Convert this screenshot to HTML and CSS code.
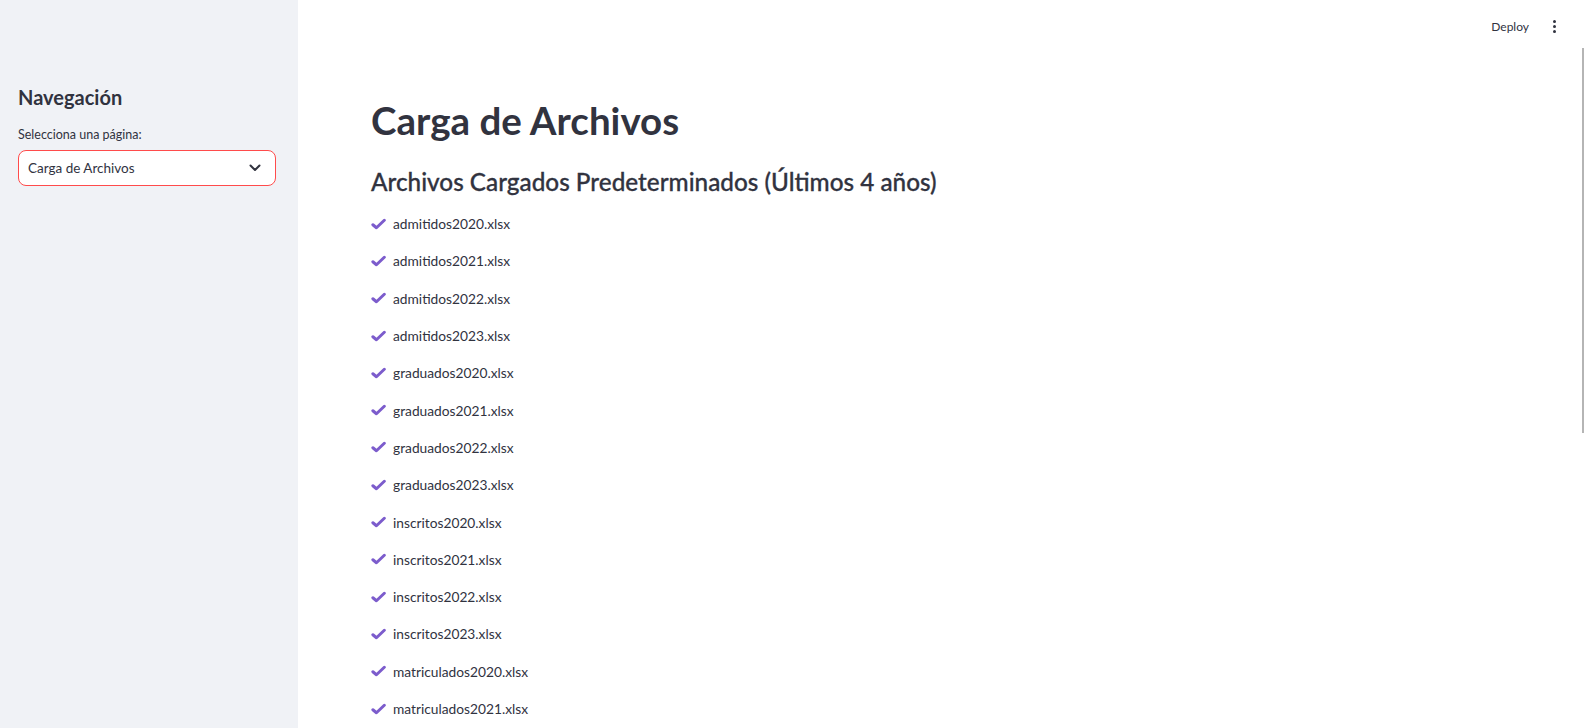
FILE: index.html
```html
<!DOCTYPE html>
<html lang="es">
<head>
<meta charset="utf-8">
<title>Carga de Archivos</title>
<link rel="stylesheet" href="styles.css">
</head>
<body>
<aside class="sidebar">
  <h3 class="side-title">Navegación</h3>
  <label class="side-label">Selecciona una página:</label>
  <div class="select">
    <span class="select-value">Carga de Archivos</span>
    <svg class="chev" width="12" height="8" viewBox="0 0 12 8"><path d="M1.5 1.5 L6 6 L10.5 1.5" fill="none" stroke="#31333f" stroke-width="2" stroke-linecap="round" stroke-linejoin="round"/></svg>
  </div>
</aside>
<main class="main">
  <header class="topbar">
    <span class="deploy">Deploy</span>
    <span class="kebab"><i></i><i></i><i></i></span>
  </header>
  <div class="scrollthumb"></div>
  <section class="content">
    <h1 class="title">Carga de Archivos</h1>
    <h2 class="subtitle">Archivos Cargados Predeterminados (Últimos 4 años)</h2>
    <ul class="files">
      <li><svg class="check" viewBox="0 0 16 12"><path d="M2 6.8 L5.8 10 L14.2 2" fill="none" stroke="currentColor" stroke-width="3.2" stroke-linecap="round" stroke-linejoin="round"/></svg>admitidos2020.xlsx</li>
      <li><svg class="check" viewBox="0 0 16 12"><path d="M2 6.8 L5.8 10 L14.2 2" fill="none" stroke="currentColor" stroke-width="3.2" stroke-linecap="round" stroke-linejoin="round"/></svg>admitidos2021.xlsx</li>
      <li><svg class="check" viewBox="0 0 16 12"><path d="M2 6.8 L5.8 10 L14.2 2" fill="none" stroke="currentColor" stroke-width="3.2" stroke-linecap="round" stroke-linejoin="round"/></svg>admitidos2022.xlsx</li>
      <li><svg class="check" viewBox="0 0 16 12"><path d="M2 6.8 L5.8 10 L14.2 2" fill="none" stroke="currentColor" stroke-width="3.2" stroke-linecap="round" stroke-linejoin="round"/></svg>admitidos2023.xlsx</li>
      <li><svg class="check" viewBox="0 0 16 12"><path d="M2 6.8 L5.8 10 L14.2 2" fill="none" stroke="currentColor" stroke-width="3.2" stroke-linecap="round" stroke-linejoin="round"/></svg>graduados2020.xlsx</li>
      <li><svg class="check" viewBox="0 0 16 12"><path d="M2 6.8 L5.8 10 L14.2 2" fill="none" stroke="currentColor" stroke-width="3.2" stroke-linecap="round" stroke-linejoin="round"/></svg>graduados2021.xlsx</li>
      <li><svg class="check" viewBox="0 0 16 12"><path d="M2 6.8 L5.8 10 L14.2 2" fill="none" stroke="currentColor" stroke-width="3.2" stroke-linecap="round" stroke-linejoin="round"/></svg>graduados2022.xlsx</li>
      <li><svg class="check" viewBox="0 0 16 12"><path d="M2 6.8 L5.8 10 L14.2 2" fill="none" stroke="currentColor" stroke-width="3.2" stroke-linecap="round" stroke-linejoin="round"/></svg>graduados2023.xlsx</li>
      <li><svg class="check" viewBox="0 0 16 12"><path d="M2 6.8 L5.8 10 L14.2 2" fill="none" stroke="currentColor" stroke-width="3.2" stroke-linecap="round" stroke-linejoin="round"/></svg>inscritos2020.xlsx</li>
      <li><svg class="check" viewBox="0 0 16 12"><path d="M2 6.8 L5.8 10 L14.2 2" fill="none" stroke="currentColor" stroke-width="3.2" stroke-linecap="round" stroke-linejoin="round"/></svg>inscritos2021.xlsx</li>
      <li><svg class="check" viewBox="0 0 16 12"><path d="M2 6.8 L5.8 10 L14.2 2" fill="none" stroke="currentColor" stroke-width="3.2" stroke-linecap="round" stroke-linejoin="round"/></svg>inscritos2022.xlsx</li>
      <li><svg class="check" viewBox="0 0 16 12"><path d="M2 6.8 L5.8 10 L14.2 2" fill="none" stroke="currentColor" stroke-width="3.2" stroke-linecap="round" stroke-linejoin="round"/></svg>inscritos2023.xlsx</li>
      <li><svg class="check" viewBox="0 0 16 12"><path d="M2 6.8 L5.8 10 L14.2 2" fill="none" stroke="currentColor" stroke-width="3.2" stroke-linecap="round" stroke-linejoin="round"/></svg>matriculados2020.xlsx</li>
      <li><svg class="check" viewBox="0 0 16 12"><path d="M2 6.8 L5.8 10 L14.2 2" fill="none" stroke="currentColor" stroke-width="3.2" stroke-linecap="round" stroke-linejoin="round"/></svg>matriculados2021.xlsx</li>
    </ul>
  </section>
</main>
</body>
</html>
```
FILE: styles.css
```css
* { box-sizing: border-box; }
html, body { margin: 0; padding: 0; height: 100%; }
body {
  display: flex;
  height: 728px;
  overflow: hidden;
  font-family: "Lato", "Noto Sans", sans-serif;
  color: #31333f;
  background: #ffffff;
}
.sidebar {
  width: 298px;
  flex: none;
  background: #f0f2f6;
  padding: 84px 22px 0 18px;
}
.side-title {
  margin: 0;
  font-size: 20px;
  font-weight: 700;
  line-height: 26px;
}
.side-label {
  display: block;
  margin-top: 17px;
  font-size: 12.5px;
  line-height: 16px;
}
.select {
  margin-top: 7px;
  height: 36px;
  border: 1px solid #ff4b4b;
  border-radius: 8px;
  background: #fff;
  display: flex;
  align-items: center;
  justify-content: space-between;
  padding: 0 14px 0 9px;
}
.select-value { font-size: 13.5px; }
.main {
  flex: 1;
  position: relative;
}
.topbar {
  height: 52px;
  display: flex;
  align-items: center;
  justify-content: flex-end;
  padding-right: 28px;
}
.deploy {
  font-size: 12px;
  margin-right: 24px;
}
.kebab {
  display: flex;
  flex-direction: column;
  gap: 2px;
}
.kebab i {
  display: block;
  width: 3px;
  height: 3px;
  border-radius: 50%;
  background: #31333f;
}
.scrollthumb {
  position: absolute;
  right: 0;
  top: 48px;
  width: 2px;
  height: 385px;
  background: #b5b5b5;
}
.content {
  padding: 40px 0 0 73px;
}
.title {
  margin: 0;
  font-size: 38.5px;
  line-height: 56px;
  font-weight: 700;
}
.subtitle {
  margin: 14px 0 0;
  font-size: 24.3px;
  font-weight: 500;
  line-height: 40px;
  -webkit-text-stroke: 0.3px #31333f;
}
.files {
  list-style: none;
  margin: 3px 0 0;
  padding: 0;
}
.files li {
  height: 37.3px;
  display: flex;
  align-items: center;
  font-size: 13.75px;
}
.check {
  width: 15px;
  height: 12px;
  color: #7c5ccc;
  margin-right: 7px;
}
```
